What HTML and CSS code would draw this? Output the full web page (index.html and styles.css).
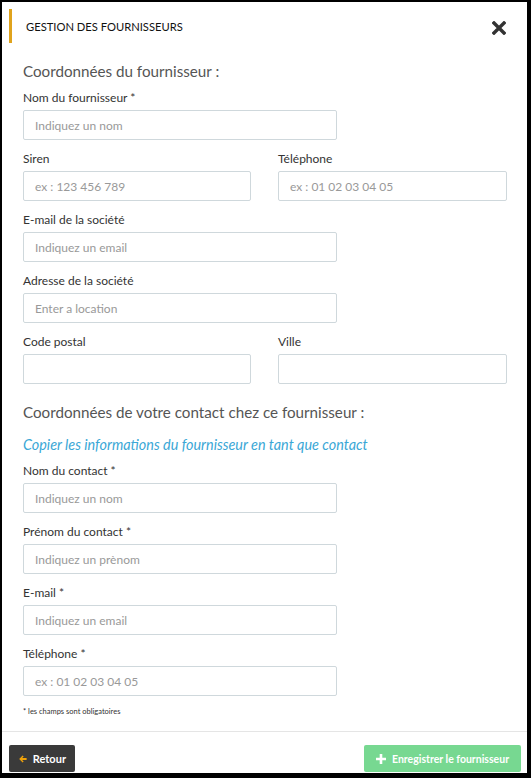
FILE: index.html
```html
<!DOCTYPE html>
<html lang="fr">
<head>
<meta charset="utf-8">
<title>Gestion des fournisseurs</title>
<link rel="stylesheet" href="styles.css">
</head>
<body>
<div class="modal">
  <header class="modal-header">
    <h1 class="modal-title">GESTION DES FOURNISSEURS</h1>
    <button class="close" type="button" aria-label="Fermer">
      <svg width="14" height="14" viewBox="0 0 14 14"><path d="M2 2 L12 12 M12 2 L2 12" stroke="#333" stroke-width="3.4" stroke-linecap="square"/></svg>
    </button>
  </header>
  <main class="modal-body">
    <h2 class="section-title">Coordonnées du fournisseur :</h2>
    <div class="field wide">
      <label>Nom du fournisseur *</label>
      <input type="text" placeholder="Indiquez un nom">
    </div>
    <div class="row">
      <div class="field">
        <label>Siren</label>
        <input type="text" placeholder="ex : 123 456 789">
      </div>
      <div class="field">
        <label>Téléphone</label>
        <input type="text" placeholder="ex : 01 02 03 04 05">
      </div>
    </div>
    <div class="field wide">
      <label>E-mail de la société</label>
      <input type="text" placeholder="Indiquez un email">
    </div>
    <div class="field wide">
      <label>Adresse de la société</label>
      <input type="text" placeholder="Enter a location">
    </div>
    <div class="row">
      <div class="field">
        <label>Code postal</label>
        <input type="text">
      </div>
      <div class="field">
        <label>Ville</label>
        <input type="text">
      </div>
    </div>
    <h2 class="section-title second">Coordonnées de votre contact chez ce fournisseur :</h2>
    <a class="copy-link" href="#">Copier les informations du fournisseur en tant que contact</a>
    <div class="field wide">
      <label>Nom du contact *</label>
      <input type="text" placeholder="Indiquez un nom">
    </div>
    <div class="field wide">
      <label>Prénom du contact *</label>
      <input type="text" placeholder="Indiquez un prènom">
    </div>
    <div class="field wide">
      <label>E-mail *</label>
      <input type="text" placeholder="Indiquez un email">
    </div>
    <div class="field wide">
      <label>Téléphone *</label>
      <input type="text" placeholder="ex : 01 02 03 04 05">
    </div>
    <p class="note">* les champs sont obligatoires</p>
  </main>
  <footer class="modal-footer">
    <button class="btn btn-dark" type="button">
      <svg width="12" height="12" viewBox="0 0 12 12"><path d="M0.3 6 L5.6 0.7 L7.2 2.3 L4.8 4.6 L11.7 4.6 L11.7 7.4 L4.8 7.4 L7.2 9.7 L5.6 11.3 Z" fill="#f0a30a"/></svg>
      Retour
    </button>
    <button class="btn btn-success" type="button">
      <svg width="10" height="10" viewBox="0 0 10 10"><path d="M3.7 0 H6.3 V3.7 H10 V6.3 H6.3 V10 H3.7 V6.3 H0 V3.7 H3.7 Z" fill="#fff"/></svg>
      Enregistrer le fournisseur
    </button>
  </footer>
</div>
</body>
</html>
```
FILE: styles.css
```css
* { box-sizing: border-box; }
html, body { height: 100%; }
body {
  margin: 0;
  background: #000;
  font-family: Lato, "Open Sans", Arial, sans-serif;
  color: #333;
  padding: 2px 4px 5px 2px;
}
.modal {
  background: #fff;
  height: 771px;
  display: flex;
  flex-direction: column;
}
.modal-header {
  display: flex;
  align-items: center;
  justify-content: space-between;
  margin: 7px 0 0 7px;
  height: 34px;
  border-left: 3px solid #e0a31c;
  padding: 0 21px 0 14px;
}
.modal-title {
  margin: 0;
  font-size: 11.2px;
  font-weight: 400;
  color: #111;
}
.close {
  border: 0;
  background: none;
  padding: 0;
  margin-top: 4px;
  display: flex;
}
.modal-body {
  flex: 1;
  padding: 17px 20px 0 21px;
}
.section-title {
  margin: 0 0 8px;
  font-size: 15.2px;
  font-weight: 400;
  color: #555;
  line-height: 22px;
}
.section-title.second {
  margin-top: 6px;
  margin-bottom: 12px;
}
.copy-link {
  display: block;
  font-style: italic;
  color: #3aa7d6;
  font-size: 14.4px;
  line-height: 20px;
  text-decoration: none;
  margin-bottom: 8px;
}
.row {
  display: grid;
  grid-template-columns: 228px 229px;
  column-gap: 27px;
}
.field {
  display: flex;
  flex-direction: column;
  margin-bottom: 11px;
}
.field.wide { width: 314px; }
.field label {
  font-size: 12px;
  line-height: 16px;
  margin-bottom: 4px;
  color: #333;
}
.field input {
  height: 30px;
  border: 1px solid #cfd8dc;
  border-radius: 2px;
  padding: 0 11px;
  font-family: inherit;
  font-size: 12px;
  color: #333;
  outline: none;
}
.field input::placeholder { color: #999; }
.note {
  margin: 0;
  font-size: 7.5px;
  line-height: 10px;
  color: #333;
}
.modal-footer {
  border-top: 1px solid #e5e5e5;
  height: 42px;
  display: flex;
  justify-content: space-between;
  align-items: flex-start;
  padding: 13px 6px 0 7px;
}
.btn {
  height: 27px;
  border: 0;
  border-radius: 2px;
  color: #fff;
  font-family: inherit;
  font-size: 11px;
  font-weight: 700;
  display: flex;
  align-items: center;
  gap: 6px;
  white-space: nowrap;
}
.btn-dark {
  background: #3a3a3a;
  padding: 0 9px 0 10px;
  width: 66px;
}
.btn-success {
  background: #77d891;
  padding: 0 4px;
  width: 157px;
  font-size: 10.5px;
  justify-content: center;
}
```
